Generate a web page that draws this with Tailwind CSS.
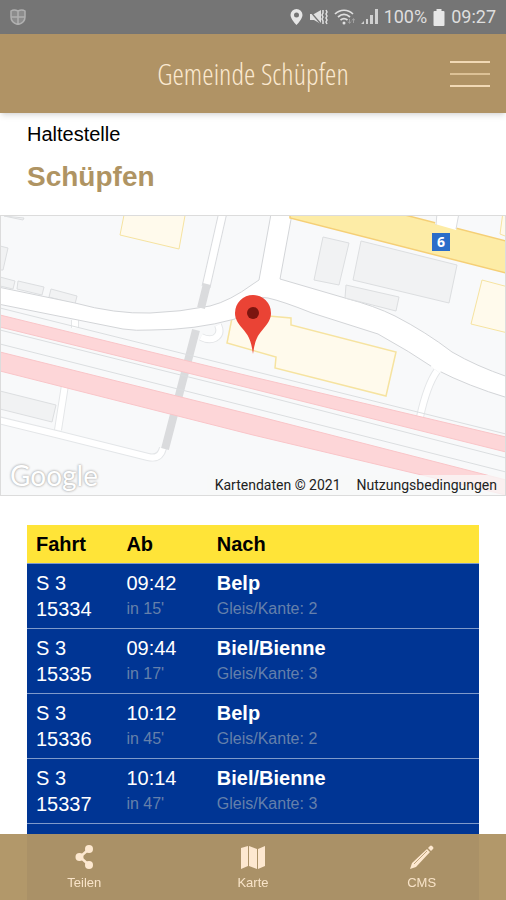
<!doctype html>
<html lang="de">
	<head>
		<meta charset="UTF-8" />
		<meta name="viewport" content="width=device-width, initial-scale=1.0" />
		<title>Gemeinde Schüpfen</title>
		<script src="https://cdn.jsdelivr.net/npm/@tailwindcss/browser@4"></script>
	</head>
	<body class="h-screen flex flex-col overflow-hidden bg-white text-black font-['Liberation_Sans',Arial,sans-serif]">
		<!-- Status bar -->
		<div class="h-[34px] shrink-0 flex items-center justify-between bg-[#757575] px-[10px] text-[#dedede] font-[Roboto,sans-serif] text-lg">
			<svg class="w-4 h-4" viewBox="0 0 16 16" fill="#8c8c8c" stroke="#b0b0b0" stroke-width="1.500">
				<path d="M1 2q3-2 7 0 4-2 7 0v6c0 4-3 6.500-7 7.500C4 14.500 1 12 1 8zM8 2v13M1 8h14" />
			</svg>
			<div class="flex items-center gap-[6px]">
				<svg class="w-[13px] h-4" viewBox="0 0 12 16" fill="#e6e6e6">
					<path fill-rule="evenodd" d="M6 0a6 6 0 0 0-6 6c0 4 6 10 6 10s6-6 6-10a6 6 0 0 0-6-6zm0 3.500a2.500 2.500 0 1 1 0 5 2.500 2.500 0 0 1 0-5z" />
				</svg>
				<svg class="w-[19px] h-4" viewBox="0 0 19 16" fill="#e0e0e0">
					<path d="M1 5h4l7-4v14l-7-4H1z" />
					<path d="M0 1l12 14" stroke="#757575" stroke-width="1.300" />
					<path d="M14 1v3l-1 2 1 2-1 2 1 2v3M17 1l1 2-1 2 1 2-1 2 1 2-1 2 1 2" fill="none" stroke="#e0e0e0" stroke-width="1.500" />
				</svg>
				<svg class="w-[21px] h-4" viewBox="0 0 21 16" fill="none" stroke="#e0e0e0" stroke-width="1.700">
					<path d="M1 5c5-5 13-5 18 0M4 8c4-3.500 8-3.500 12 0M6.500 11c2.500-2 4.500-2 7 0" />
					<circle cx="10" cy="14" r="1.500" fill="#e0e0e0" stroke="none" />
					<path d="M15.500 10v4M14 12.500l1.500 2 1.500-2M19.500 14v-4M18 11.500l1.500-2 1.500 2" stroke="#a0a0a0" stroke-width="1" />
				</svg>
				<svg class="w-[17px] h-4" viewBox="0 0 17 16" fill="#d0d0d0">
					<path d="M0 15l3-3v3zM5 10h2v5H5zM9 6h3v9H9zM14 0h3v15h-3z" />
				</svg>
				<span>100%</span>
				<svg class="w-3 h-[17px]" viewBox="0 0 11 17" fill="#e6e6e6">
					<path d="M3 0h5v2h2q1 0 1 1v13q0 1-1 1H1q-1 0-1-1V3q0-1 1-1h2z" />
				</svg>
				<span>09:27</span>
			</div>
		</div>

		<!-- App header -->
		<header class="relative z-10 h-[79px] shrink-0 grid grid-cols-[1fr_auto_1fr] items-center px-4 bg-[#b09365] shadow-md">
			<h1 class="col-start-2 font-['Open_Sans_Condensed_Light','Open_Sans_Light_Condensed','Roboto_Condensed_Light','Roboto_Condensed','Noto_Sans_Condensed_Light','Noto_Sans_Condensed',Lato,sans-serif] font-light text-[29px] text-[#fbe9d0]">Gemeinde Schüpfen</h1>
			<button type="button" aria-label="Menü" class="justify-self-end w-10 flex flex-col gap-[10px]">
				<span class="block h-[2px] w-full bg-[#f1d9b5]"></span>
				<span class="block h-[2px] w-full bg-[#dcc196]"></span>
				<span class="block h-[2px] w-full bg-[#f1d9b5]"></span>
			</button>
		</header>

		<main class="flex-1 min-h-0 overflow-y-auto [scrollbar-width:none]">
			<div class="px-[27px] pt-2">
				<p class="text-xl leading-[26px]">Haltestelle</p>
				<h2 class="mt-3 text-[28px] leading-9 font-bold text-[#af9463]">Schüpfen</h2>
			</div>

			<!-- Map -->
			<div class="relative mt-5 h-[281px] border border-[#dcdcdc]">
				<svg class="w-full h-full" viewBox="1 216 504 279" preserveAspectRatio="xMidYMid slice">
					<rect x="0" y="215" width="506" height="281" fill="#f8f9fa" />
					<!-- buildings -->
					<g fill="#f1f2f3" stroke="#dcdee0">
						<path d="M0 277l15 4-2 8-13-3zM18 281l26 6-2 8-25-6zM51 289l26 7-2 8-26-7zM0 246l8 2-5 22H0zM4 216l20 2-1 2zM0 391l56 14-4 17-52-13z" />
						<path d="M323 237l26 6-10 42-25-5zM361 241l96 24-8 38-96-23z" />
					</g>
					<g fill="#fffaec" stroke="#f6e3a0">
						<path d="M125 210l-5 25 59 14 7-39z" />
						<path d="M482 280l30 8v46l-41-10z" />
						<path d="M233 313l-6 30 49 14-1 11 111 28 10-44-105-27v-7z" stroke-width="1.500" />
					</g>
					<!-- roads -->
					<path d="M223 212l-17 75" stroke="#d9dbde" stroke-width="9" />
					<path d="M223 212l-17 75" stroke="#fff" stroke-width="7" />
					<path d="M-2 420l62 15 88 22q12 3 15-9M65 385l-7 45M437 371q-10 14-17 46M75 320v8M218 325q4 9-3 13-6 3-14-1" fill="none" stroke="#e4e6e8" stroke-width="8" />
					<path d="M-2 420l62 15 88 22q12 3 15-9M65 385l-7 45M437 371q-10 14-17 46M75 320v8M218 325q4 9-3 13-6 3-14-1" fill="none" stroke="#fff" stroke-width="6" />
					<path d="M-2 287L75 303q40 11 75 10 30-1 60-7 20-5 43-22l6-4 12-66h21l-12 65 65 19q30 8 50 18 31 16 57 36 24 14 56 25v21q-40-12-71-28-28-19-59-36l-66-21q-30-12-44-15-11-2-18 3-8 7-15 18-40 11-84 11-15 1-28-1L-2 304z" fill="#fff" stroke="#d3d5d8" />
					<path d="M432 365l9 6" stroke="#fff" stroke-width="4" />
					<path d="M346 285l53 12-3 14-51-13z" fill="#f1f2f3" stroke="#dcdee0" />
					<path d="M207 284l-6 24M196 330l-31 119" stroke="#dadbdd" stroke-width="8" />
					<!-- main road -->
					<path d="M290 210v8l220 56v-32l-105-27z" fill="#fdeca6" stroke="#f5cf76" stroke-width="1.500" />
					<path d="M438 210l-3 14 21 6 4-20z" fill="#fff" />
					<path d="M437 213l-1 12M459 213l-3 16" stroke="#d9dbde" />
					<path d="M503 212l-3 22 10 4v-26z" fill="#fffaec" stroke="#f6e3a0" />
					<!-- railway -->
					<path d="M0 308l253 63 253 63M0 330l253 63 253 65M0 344l253 64 253 64" fill="none" stroke="#dbdee0" />
					<path d="M0 315l253 62 253 60v15l-253-63L0 327zM0 352l253 63 253 65v15l-253-60L0 371z" fill="#fdd6d8" stroke="#f9c5c8" />
					<!-- marker -->
					<path d="M253 354c-2-15-5-19-11-26-4-5-7-9-7-15a18 18 0 0 1 36 0c0 6-3 10-7 15-6 7-9 11-11 26z" fill="#ea4335" />
					<circle cx="253" cy="313" r="6" fill="#7c150f" />
				</svg>
				<span class="absolute left-[431px] top-[17px] w-[18px] h-[18px] bg-[#2a6dc9] text-white text-sm leading-[18px] font-bold text-center font-['Open_Sans',sans-serif]">6</span>
				<a href="#" class="absolute left-[9px] bottom-0 text-[28px] leading-10 text-white font-[Lato,sans-serif] [text-shadow:0_0_2px_#aaa,0_0_3px_#bbb]">Google</a>
				<div class="absolute right-0 bottom-0 flex gap-4 px-2 bg-[#f8f8f8]/75 text-sm leading-5 text-[#222] font-[Roboto,sans-serif]">
					<span>Kartendaten © 2021</span>
					<a href="#">Nutzungsbedingungen</a>
				</div>
			</div>

			<!-- Departures -->
			<div class="px-[27px] mt-[29px]">
				<table class="w-full table-fixed border-collapse text-left text-xl leading-[26px]">
					<thead class="bg-[#ffe438]">
						<tr class="h-[38px]">
							<th class="w-1/5 pl-[9px]">Fahrt</th>
							<th class="w-1/5 pl-[9px]">Ab</th>
							<th class="pl-[9px]">Nach</th>
						</tr>
					</thead>
					<tbody id="departures" class="bg-[#003594] text-white align-top"></tbody>
					<tfoot class="bg-[#003594]">
						<tr class="h-20 border-t border-[#7f9aca]">
							<td colspan="3"></td>
						</tr>
					</tfoot>
				</table>
			</div>
		</main>

		<!-- Bottom navigation -->
		<nav class="fixed inset-x-0 bottom-0 h-[66px] grid grid-cols-3 bg-[#b09565]/97 text-[#f8e3c8] text-[13px] leading-4">
			<a href="#" class="flex flex-col items-center gap-[5px] pt-[10px]">
				<svg class="w-[26px] h-[26px]" viewBox="0 0 26 26" fill="#fde8d0">
					<path d="M18 5L9 13l9 8" fill="none" stroke="#fde8d0" stroke-width="2.500" />
					<circle cx="18" cy="5" r="4" /><circle cx="8.500" cy="13" r="4" /><circle cx="18" cy="21" r="4" />
				</svg>
				Teilen
			</a>
			<a href="#" class="flex flex-col items-center gap-[5px] pt-[10px]">
				<svg class="w-[26px] h-[26px]" viewBox="0 0 26 26" fill="#fde8d0">
					<path d="M1 4l7-2v20l-7 3zM9 2l8 3v20l-8-3zM18 5l7-3v20l-7 3z" />
				</svg>
				Karte
			</a>
			<a href="#" class="flex flex-col items-center gap-[5px] pt-[10px]">
				<svg class="w-[26px] h-[26px]" viewBox="0 0 26 26" fill="#fde8d0">
					<path d="M1 25l2-6L18 5l3 3L7 23zM19 4l2-2q1-1 2 0l1 1q1 1 0 2l-2 2z" />
					<path d="M5 20L18 7" stroke="#b09365" stroke-width=".8" />
				</svg>
				CMS
			</a>
		</nav>

		<script>
			const departures = [
				{ trip: '15334', time: '09:42', wait: 15, to: 'Belp', platform: 2 },
				{ trip: '15335', time: '09:44', wait: 17, to: 'Biel/Bienne', platform: 3 },
				{ trip: '15336', time: '10:12', wait: 45, to: 'Belp', platform: 2 },
				{ trip: '15337', time: '10:14', wait: 47, to: 'Biel/Bienne', platform: 3 },
			];

			document.getElementById('departures').innerHTML = departures
				.map(
					(d) => `
					<tr class="border-t border-[#7f9aca]">
						<td class="pl-[9px] py-[6px]">S 3<br />${d.trip}</td>
						<td class="pl-[9px] py-[6px]">${d.time}<div class="text-base leading-[26px] text-[#6580ab]">in ${d.wait}'</div></td>
						<td class="pl-[9px] py-[6px]"><b>${d.to}</b><div class="text-base leading-[26px] text-[#6580ab]">Gleis/Kante: ${d.platform}</div></td>
					</tr>`
				)
				.join('');
		</script>
	</body>
</html>
